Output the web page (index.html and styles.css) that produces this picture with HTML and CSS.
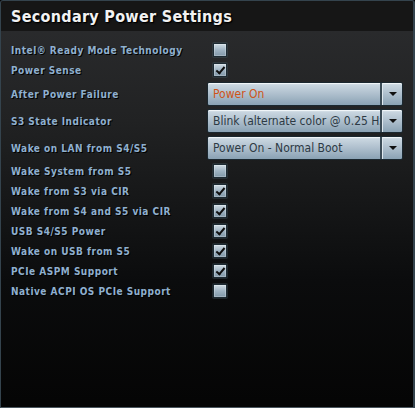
FILE: index.html
```html
<!DOCTYPE html>
<html>
<head>
<meta charset="utf-8">
<link rel="stylesheet" href="styles.css">
</head>
<body>
<div class="panel">
  <div class="titlebar"><h1 class="title">Secondary Power Settings</h1></div>
  <div class="content">
    <div class="row"><span class="label">Intel® Ready Mode Technology</span><span class="cb"></span></div>
    <div class="row"><span class="label">Power Sense</span><span class="cb checked"></span></div>
    <div class="row sel"><span class="label">After Power Failure</span><div class="select"><span class="value accent">Power On</span><span class="arrow"></span></div></div>
    <div class="row sel"><span class="label">S3 State Indicator</span><div class="select"><span class="value">Blink (alternate color @ 0.25 Hz)</span><span class="arrow"></span></div></div>
    <div class="row sel"><span class="label">Wake on LAN from S4/S5</span><div class="select"><span class="value">Power On - Normal Boot</span><span class="arrow"></span></div></div>
    <div class="row"><span class="label">Wake System from S5</span><span class="cb"></span></div>
    <div class="row"><span class="label">Wake from S3 via CIR</span><span class="cb checked"></span></div>
    <div class="row"><span class="label">Wake from S4 and S5 via CIR</span><span class="cb checked"></span></div>
    <div class="row"><span class="label">USB S4/S5 Power</span><span class="cb checked"></span></div>
    <div class="row"><span class="label">Wake on USB from S5</span><span class="cb checked"></span></div>
    <div class="row"><span class="label">PCIe ASPM Support</span><span class="cb checked"></span></div>
    <div class="row"><span class="label">Native ACPI OS PCIe Support</span><span class="cb"></span></div>
  </div>
</div>
</body>
</html>
```
FILE: styles.css
```css
html, body { margin: 0; padding: 0; background: #000; }
.panel {
  width: 415px; height: 408px; box-sizing: border-box;
  border: 1px solid #34434d; border-right-width: 2px; border-bottom-color: #4a565e;
  border-radius: 3px 3px 0 0;
  background: linear-gradient(#2c2d2f 0px, #212223 120px, #0b0c0d 280px, #050505 400px);
  display: flex; flex-direction: column; overflow: hidden;
}
.titlebar {
  height: 30px; background: #161616; display: flex; align-items: center;
  padding-left: 10px; flex: none;
}
.title {
  margin: 0; font-family: "DejaVu Sans Condensed", "DejaVu Sans", sans-serif; font-weight: bold; font-size: 16px;
  color: #f2f2f2; text-shadow: 1px 1px 0 #000, 1px 1px 2px #000; letter-spacing: 0.3px;
}
.content { padding: 9px 0 0 10px; display: flex; flex-direction: column; }
.row { height: 20px; display: flex; align-items: center; }
.row.sel { height: 24px; margin: 2px 0 1px; }
.label {
  width: 196px; flex: none; font-family: "DejaVu Sans Condensed", "DejaVu Sans", sans-serif; font-weight: bold;
  font-size: 10px; color: #8fb0cf; text-shadow: 1px 1px 0 #000; letter-spacing: 0.5px;
}
.cb {
  width: 14px; height: 14px; box-sizing: border-box; margin-left: 6px;
  border: 1px solid #1d2b33; border-radius: 1px;
  background: linear-gradient(#cfdbe3, #9fb3c2 50%, #8198a9);
  box-shadow: inset 0 0 0 1px rgba(255,255,255,0.25), 0 0 0 1px rgba(70,90,100,0.35);
  position: relative;
}
.cb.checked::after {
  content: ""; position: absolute; left: 4px; top: 1px; width: 3px; height: 7px;
  border: solid #111; border-width: 0 2px 2px 0; transform: rotate(40deg);
}
.select {
  width: 196px; height: 24px; box-sizing: border-box; display: flex;
  border: 1px solid #1b2830; border-radius: 2px;
  background: linear-gradient(#e4ecf2 0, #c9d6e0 2px, #aebfcd 50%, #8aa2b4 100%);
  box-shadow: inset 0 1px 0 #f0f5f8;
}
.value {
  flex: 1; min-width: 0; overflow: hidden; white-space: nowrap;
  font-family: "DejaVu Sans Condensed", "DejaVu Sans", sans-serif; font-size: 12px; color: #2d3a44;
  line-height: 22px; padding-left: 5px;
}
.value.accent { color: #cf5418; }
.arrow {
  width: 20px; flex: none; border-left: 2px solid #3c4c57; position: relative;
  box-shadow: inset 1px 0 0 #dfe8ee;
}
.arrow::after {
  content: ""; position: absolute; left: 7px; top: 9px;
  border-style: solid; border-width: 4px 4px 0 4px; border-color: #111 transparent transparent transparent;
}
```
